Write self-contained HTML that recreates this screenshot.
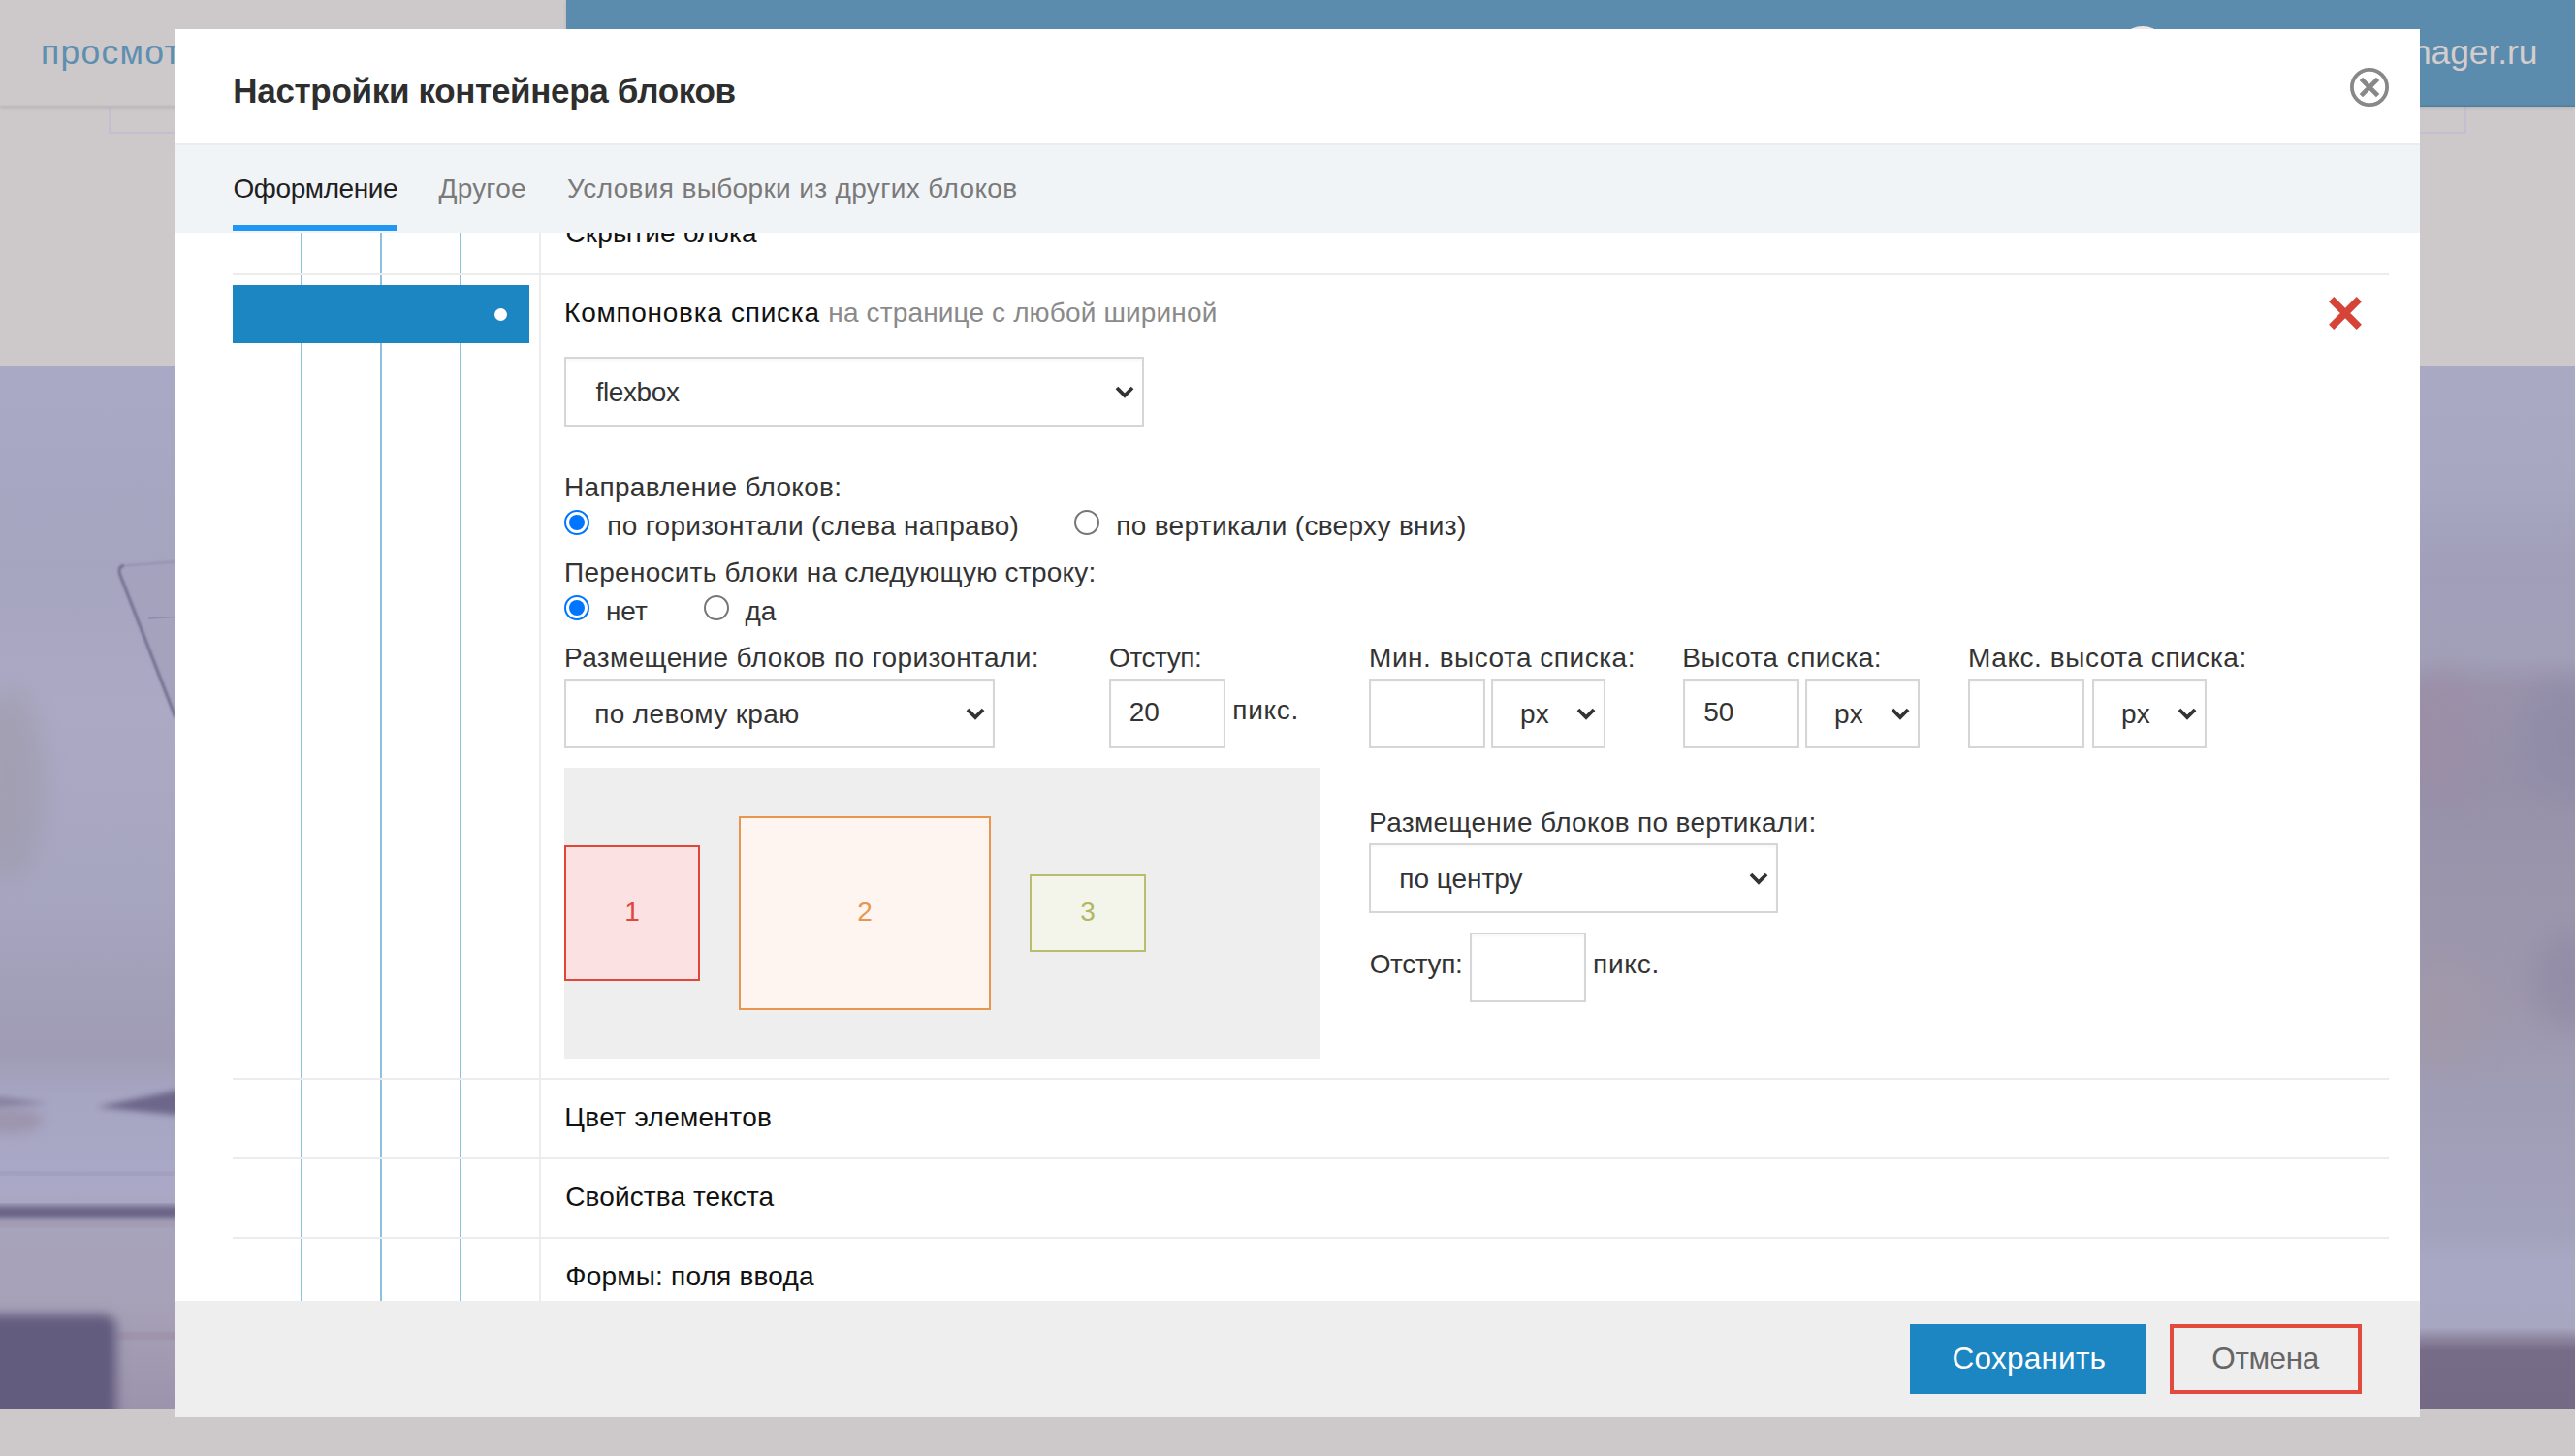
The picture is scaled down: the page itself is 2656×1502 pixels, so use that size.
<!DOCTYPE html>
<html lang="ru">
<head>
<meta charset="utf-8">
<title>Настройки контейнера блоков</title>
<style>
html,body{margin:0;padding:0}html{background:#cdc9ca}
body{width:2656px;height:1502px;overflow:hidden;position:relative;background:#cdc9ca;font-family:"Liberation Sans",sans-serif}
.a{position:absolute;box-sizing:border-box}
.t{position:absolute;white-space:nowrap;line-height:1}
.hero{left:0;top:378px;width:2656px;height:1075px;background:#a8a7c3;overflow:hidden}
.topL{left:0;top:0;width:584px;height:110px;background:linear-gradient(180deg,#cdc9ca 0,#cdc9ca 107.5px,#c3bfc0 109px,#bfbbbc 110px);box-shadow:0 1px 3px rgba(60,50,60,.16)}
.topR{left:584px;top:0;width:2072px;height:110px;background:linear-gradient(180deg,#5b8cad 0,#5b8cad 107.5px,#51819f 109px,#4f7e9c 110px);box-shadow:0 1px 3px rgba(60,50,60,.16)}
.orect{left:112px;top:90px;width:2432px;height:48px;border:2px solid #c2bfd0}
.modal{left:180px;top:30px;width:2316px;height:1432px;background:#fff}
.vl{width:2px;top:240px;height:1102px;background:#8ec1e1}
.hl{left:240px;width:2224px;height:2px;background:#ececec}
.sel,.inp{background:#fff;border:2px solid #d6d6d6;height:72px;box-shadow:inset 0 2px 3px rgba(0,0,0,.03)}
.chev{position:absolute;right:7.6px;top:50%;margin-top:-7.5px;width:20px;height:14px;overflow:visible}
.radio{width:26px;height:26px;border-radius:50%;background:#fff}
.radio.on{border:2.2px solid #0075ff}
.radio.on::after{content:"";position:absolute;left:2.8px;top:2.8px;width:16px;height:16px;border-radius:50%;background:#0075ff}
.radio.off{border:2px solid #767676}
.bx{border:2px solid;display:flex;align-items:center;justify-content:center;font-size:28px;padding-bottom:2.6px}
</style>
</head>
<body>
<!-- page behind the dialog -->
<svg class="a" style="left:0;top:378px" width="2656" height="1075" viewBox="0 378 2656 1075">
<defs>
<linearGradient id="gL" x1="0" y1="378" x2="0" y2="1453" gradientUnits="userSpaceOnUse">
<stop offset="0" stop-color="#a9a9c5"/><stop offset=".19" stop-color="#a6a5c0"/><stop offset=".33" stop-color="#aba9c4"/><stop offset=".5" stop-color="#a7a6c1"/><stop offset=".61" stop-color="#a19eb7"/><stop offset=".66" stop-color="#a09cb5"/><stop offset=".70" stop-color="#a6a5c2"/><stop offset=".79" stop-color="#a9a8c6"/><stop offset=".83" stop-color="#a7a3bb"/><stop offset=".9" stop-color="#a7a1b8"/><stop offset="1" stop-color="#9b94ac"/>
</linearGradient>
<linearGradient id="gR" x1="0" y1="378" x2="0" y2="1453" gradientUnits="userSpaceOnUse">
<stop offset="0" stop-color="#a9a9c4"/><stop offset=".11" stop-color="#a7a7c2"/><stop offset=".2" stop-color="#a09eb9"/><stop offset=".28" stop-color="#a29fb8"/><stop offset=".31" stop-color="#9992ab"/><stop offset=".4" stop-color="#9690a9"/><stop offset=".5" stop-color="#9b95ac"/><stop offset=".62" stop-color="#9e98ad"/><stop offset=".7" stop-color="#9f9db6"/><stop offset=".83" stop-color="#a3a2bc"/><stop offset=".86" stop-color="#a8a8c4"/><stop offset=".922" stop-color="#a8a7c2"/><stop offset=".934" stop-color="#8b839d"/><stop offset=".945" stop-color="#766c88"/><stop offset="1" stop-color="#746a86"/>
</linearGradient>
<filter id="b1" x="-20%" y="-20%" width="140%" height="140%"><feGaussianBlur stdDeviation="1"/></filter>
<filter id="b3" x="-20%" y="-20%" width="140%" height="140%"><feGaussianBlur stdDeviation="3"/></filter>
<filter id="b6" x="-20%" y="-50%" width="140%" height="200%"><feGaussianBlur stdDeviation="6"/></filter>
<filter id="b14" x="-50%" y="-50%" width="200%" height="200%"><feGaussianBlur stdDeviation="14"/></filter>
<clipPath id="cL"><rect x="0" y="378" width="180" height="1075"/></clipPath>
</defs>
<rect x="0" y="378" width="2656" height="1075" fill="#a8a7c3"/>
<g clip-path="url(#cL)">
<rect x="0" y="378" width="180" height="1075" fill="url(#gL)"/>
<ellipse cx="10" cy="810" rx="36" ry="100" fill="#97929a" opacity=".38" filter="url(#b14)"/>
<path d="M122 584 L190 578 L190 745 L176 730 Z" fill="#a4a2bd"/>
<path d="M190 578.5 L128 583.5" fill="none" stroke="#9391af" stroke-width="2" filter="url(#b1)"/><path d="M128 583.5 Q121.500 584 123.500 592 L181 740" fill="none" stroke="#726f8f" stroke-width="3" filter="url(#b1)"/>
<path d="M153 638 L190 636" stroke="#8f8cab" stroke-width="1.6" fill="none"/>
<path d="M100 1142 L190 1123 L190 1151 Z" fill="#676185" opacity=".9" filter="url(#b3)"/>
<path d="M-5 1131 L50 1138 L-5 1143 Z" fill="#85819f" filter="url(#b3)"/><ellipse cx="10" cy="1156" rx="34" ry="13" fill="#9a8ea6" opacity=".7" filter="url(#b6)"/>
<path d="M-5 1209 L60 1212 L180 1211" stroke="#8a87a8" stroke-width="2.5" fill="none" filter="url(#b3)" opacity=".8"/>
<rect x="-20" y="1244" width="220" height="13" fill="#6b6486" filter="url(#b3)"/><rect x="-20" y="1257" width="220" height="8" fill="#9c90a6" opacity=".6" filter="url(#b3)"/>
<rect x="120" y="1375" width="80" height="6" fill="#998a9e" opacity=".8" filter="url(#b3)"/>
<rect x="-30" y="1356" width="150" height="120" rx="14" fill="#625c7e" filter="url(#b6)"/>
</g>
<rect x="2496" y="378" width="160" height="1075" fill="url(#gR)"/>
<ellipse cx="2520" cy="760" rx="40" ry="70" fill="#9d8ea6" opacity=".6" filter="url(#b14)"/>
<ellipse cx="2650" cy="760" rx="50" ry="60" fill="#8c8aa8" opacity=".6" filter="url(#b14)"/>
<ellipse cx="2520" cy="1050" rx="40" ry="60" fill="#a39aa8" opacity=".6" filter="url(#b14)"/>
<ellipse cx="2650" cy="1010" rx="40" ry="50" fill="#8d88a4" opacity=".6" filter="url(#b14)"/>
</svg>
<div class="a orect"></div>
<div class="a topL"></div>
<div class="a topR"></div>
<span class="t" style="left:41.9px;top:36.8px;font-size:35.5px;letter-spacing:1.3px;color:#5e8fb0">просмотр</span>
<span class="t" style="right:38.6px;top:36.8px;font-size:35.5px;letter-spacing:-.1px;color:#d3cdce">blockmanager.ru</span>
<div class="a" style="left:2182px;top:26.5px;width:56px;height:56px;border-radius:50%;background:#e9e6e8"></div>

<!-- dialog -->
<div class="a modal"></div>
<!-- left grid -->
<div class="a vl" style="left:310px"></div>
<div class="a vl" style="left:392px"></div>
<div class="a vl" style="left:474px"></div>
<div class="a" style="left:556px;top:240px;width:2px;height:1102px;background:#ececec"></div>
<div class="a hl" style="top:282px"></div>
<div class="a hl" style="top:1112px"></div>
<div class="a hl" style="top:1194px"></div>
<div class="a hl" style="top:1276px"></div>
<div class="a" style="left:240px;top:294px;width:306px;height:60px;background:#1c86c2"></div>
<div class="a" style="left:509.5px;top:317.5px;width:13px;height:13px;border-radius:50%;background:#fff"></div>

<!-- red delete cross -->
<svg class="a" style="left:2399px;top:303px" width="40" height="40" viewBox="-20 -20 40 40"><path d="M-14.3-14.3 14.3 14.3M14.3-14.3-14.3 14.3" stroke="#d64337" stroke-width="7.4" fill="none"/></svg>

<!-- controls -->
<div class="a sel" style="left:582px;top:368px;width:598px"><svg class="chev" viewBox="-10 -7 20 14"><path d="M-8.05-4 0 4.05 8.05-4" stroke="#333" stroke-width="3.8" fill="none"/></svg></div>

<div class="a radio on" style="left:582px;top:526px"></div>
<div class="a radio off" style="left:1108px;top:526px"></div>
<div class="a radio on" style="left:582px;top:614px"></div>
<div class="a radio off" style="left:726px;top:614px"></div>

<div class="a sel" style="left:582px;top:700px;width:444px"><svg class="chev" viewBox="-10 -7 20 14"><path d="M-8.05-4 0 4.05 8.05-4" stroke="#333" stroke-width="3.8" fill="none"/></svg></div>
<div class="a inp" style="left:1144px;top:700px;width:120px"></div>

<div class="a inp" style="left:1412px;top:700px;width:120px"></div>
<div class="a sel" style="left:1538px;top:700px;width:118px"><svg class="chev" viewBox="-10 -7 20 14"><path d="M-8.05-4 0 4.05 8.05-4" stroke="#333" stroke-width="3.8" fill="none"/></svg></div>
<div class="a inp" style="left:1736px;top:700px;width:120px"></div>
<div class="a sel" style="left:1862px;top:700px;width:118px"><svg class="chev" viewBox="-10 -7 20 14"><path d="M-8.05-4 0 4.05 8.05-4" stroke="#333" stroke-width="3.8" fill="none"/></svg></div>
<div class="a inp" style="left:2030px;top:700px;width:120px"></div>
<div class="a sel" style="left:2158px;top:700px;width:118px"><svg class="chev" viewBox="-10 -7 20 14"><path d="M-8.05-4 0 4.05 8.05-4" stroke="#333" stroke-width="3.8" fill="none"/></svg></div>

<div class="a sel" style="left:1412px;top:870px;width:422px"><svg class="chev" viewBox="-10 -7 20 14"><path d="M-8.05-4 0 4.05 8.05-4" stroke="#333" stroke-width="3.8" fill="none"/></svg></div>
<div class="a inp" style="left:1516px;top:962px;width:120px"></div>

<!-- flex preview -->
<div class="a" style="left:582px;top:792px;width:780px;height:300px;background:#eee"></div>
<div class="a bx" style="left:582px;top:872px;width:140px;height:140px;border-color:#e0473a;background:#fbe1e1;color:#e0473a">1</div>
<div class="a bx" style="left:762px;top:842px;width:260px;height:200px;border-color:#e8964e;background:#fef4f0;color:#e8964e">2</div>
<div class="a bx" style="left:1062px;top:902px;width:120px;height:80px;border-color:#b9be6e;background:#f3f5ea;color:#b2b766">3</div>

<span class="t" id="row0" style="left:583.5px;top:227.2px;font-size:28px;color:#111;font-weight:400;letter-spacing:0.14px">Скрытие блока</span>

<!-- dialog header + tabs (cover scrolled content) -->
<div class="a" style="left:180px;top:30px;width:2316px;height:118px;background:#fff"></div>
<div class="a" style="left:180px;top:148px;width:2316px;height:92px;background:#f1f4f7;border-top:2px solid #ebeced"></div>
<div class="a" style="left:240px;top:232px;width:170px;height:6px;background:#2196f3"></div>
<svg class="a" style="left:2420px;top:66px" width="48" height="48" viewBox="-24 -24 48 48"><circle r="18.1" fill="none" stroke="#888" stroke-width="3.8"/><path d="M-8.6-8.6 8.6 8.6M8.6-8.6-8.6 8.6" stroke="#888" stroke-width="4.8" fill="none"/></svg>

<!-- dialog footer -->
<div class="a" style="left:180px;top:1342px;width:2316px;height:120px;background:#eee"></div>
<div class="a" style="left:1970px;top:1366px;width:244px;height:72px;background:#1c86c2"></div>
<div class="a" style="left:2238px;top:1366px;width:198px;height:72px;border:4px solid #e24a3e"></div>

<span class="t" id="title" style="left:240.3px;top:76.3px;font-size:35px;color:#2e2e2e;font-weight:700;letter-spacing:-0.32px">Настройки контейнера блоков</span>
<span class="t" id="tab1" style="left:240.5px;top:180.8px;font-size:28px;color:#1f1f1f;font-weight:400;letter-spacing:-0.41px">Оформление</span>
<span class="t" id="tab2" style="left:452.6px;top:180.8px;font-size:28px;color:#7a7a7a;font-weight:400;letter-spacing:0.18px">Другое</span>
<span class="t" id="tab3" style="left:585.0px;top:180.8px;font-size:28px;color:#7a7a7a;font-weight:400;letter-spacing:0.36px">Условия выборки из других блоков</span>
<span class="t" id="h1" style="left:582.1px;top:308.8px;font-size:28px;color:#111;font-weight:400;letter-spacing:0.73px">Компоновка списка</span>
<span class="t" id="h1g" style="left:854.3px;top:308.8px;font-size:28px;color:#8a8a8a;font-weight:400;letter-spacing:0.15px">на странице с любой шириной</span>
<span class="t" id="flex" style="left:614.5px;top:390.8px;font-size:28px;color:#333;font-weight:400;letter-spacing:-0.39px">flexbox</span>
<span class="t" id="l1" style="left:582.1px;top:488.8px;font-size:28px;color:#333;font-weight:400;letter-spacing:0.30px">Направление блоков:</span>
<span class="t" id="r1" style="left:626.3px;top:528.8px;font-size:28px;color:#333;font-weight:400;letter-spacing:0.29px">по горизонтали (слева направо)</span>
<span class="t" id="r2" style="left:1151.2px;top:528.8px;font-size:28px;color:#333;font-weight:400;letter-spacing:0.33px">по вертикали (сверху вниз)</span>
<span class="t" id="l2" style="left:582.1px;top:576.8px;font-size:28px;color:#333;font-weight:400;letter-spacing:0.25px">Переносить блоки на следующую строку:</span>
<span class="t" id="r3" style="left:624.9px;top:616.8px;font-size:28px;color:#333;font-weight:400;letter-spacing:0.00px">нет</span>
<span class="t" id="r4" style="left:768.5px;top:616.8px;font-size:28px;color:#333;font-weight:400;letter-spacing:0.00px">да</span>
<span class="t" id="l3" style="left:582.1px;top:664.8px;font-size:28px;color:#333;font-weight:400;letter-spacing:0.37px">Размещение блоков по горизонтали:</span>
<span class="t" id="l4" style="left:1144.1px;top:664.8px;font-size:28px;color:#333;font-weight:400;letter-spacing:-0.45px">Отступ:</span>
<span class="t" id="s2" style="left:613.3px;top:722.8px;font-size:28px;color:#333;font-weight:400;letter-spacing:0.35px">по левому краю</span>
<span class="t" id="i1" style="left:1164.7px;top:720.8px;font-size:28px;color:#333;font-weight:400;letter-spacing:0.00px">20</span>
<span class="t" id="px0" style="left:1271.3px;top:718.8px;font-size:28px;color:#333;font-weight:400;letter-spacing:0.73px">пикс.</span>
<span class="t" id="l5" style="left:1412.1px;top:664.8px;font-size:28px;color:#333;font-weight:400;letter-spacing:0.51px">Мин. высота списка:</span>
<span class="t" id="l6" style="left:1735.3px;top:664.8px;font-size:28px;color:#333;font-weight:400;letter-spacing:0.49px">Высота списка:</span>
<span class="t" id="l7" style="left:2030.1px;top:664.8px;font-size:28px;color:#333;font-weight:400;letter-spacing:0.56px">Макс. высота списка:</span>
<span class="t" id="p1" style="left:1568.1px;top:722.8px;font-size:28px;color:#333;font-weight:400;letter-spacing:0.00px">px</span>
<span class="t" id="p2" style="left:1892.1px;top:722.8px;font-size:28px;color:#333;font-weight:400;letter-spacing:0.00px">px</span>
<span class="t" id="p3" style="left:2188.1px;top:722.8px;font-size:28px;color:#333;font-weight:400;letter-spacing:0.00px">px</span>
<span class="t" id="i2" style="left:1757.2px;top:720.8px;font-size:28px;color:#333;font-weight:400;letter-spacing:0.00px">50</span>
<span class="t" id="l8" style="left:1412.1px;top:834.8px;font-size:28px;color:#333;font-weight:400;letter-spacing:0.32px">Размещение блоков по вертикали:</span>
<span class="t" id="s3" style="left:1443.3px;top:892.8px;font-size:28px;color:#333;font-weight:400;letter-spacing:-0.03px">по центру</span>
<span class="t" id="l9" style="left:1412.7px;top:980.8px;font-size:28px;color:#333;font-weight:400;letter-spacing:-0.38px">Отступ:</span>
<span class="t" id="px9" style="left:1643.1px;top:980.8px;font-size:28px;color:#333;font-weight:400;letter-spacing:0.73px">пикс.</span>
<span class="t" id="row2" style="left:582.3px;top:1138.8px;font-size:28px;color:#111;font-weight:400;letter-spacing:0.33px">Цвет элементов</span>
<span class="t" id="row3" style="left:583.3px;top:1221.2px;font-size:28px;color:#111;font-weight:400;letter-spacing:0.10px">Свойства текста</span>
<span class="t" id="row4" style="left:583.3px;top:1303.2px;font-size:28px;color:#111;font-weight:400;letter-spacing:0.20px">Формы: поля ввода</span>
<span class="t" id="save" style="left:2013.5px;top:1386.0px;font-size:31.5px;color:#fff;font-weight:400;letter-spacing:0.25px">Сохранить</span>
<span class="t" id="cancel" style="left:2281.3px;top:1386.0px;font-size:31.5px;color:#666;font-weight:400;letter-spacing:-0.42px">Отмена</span>
</body>
</html>
